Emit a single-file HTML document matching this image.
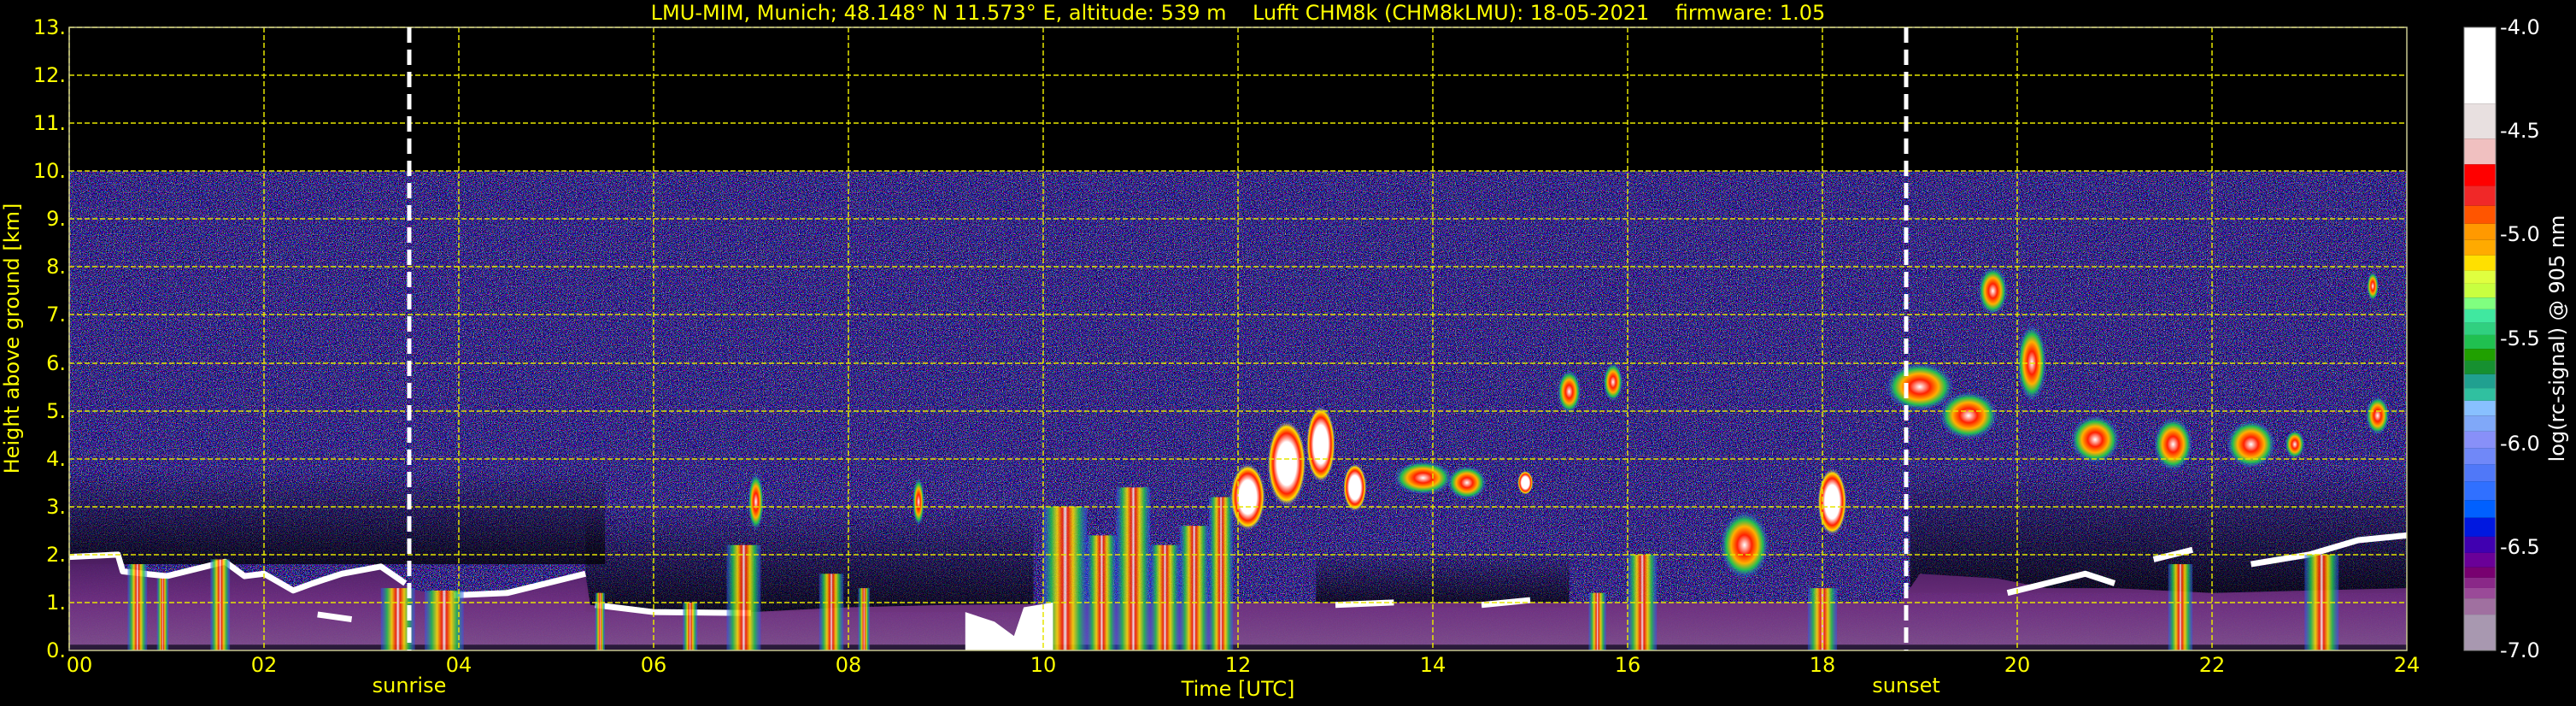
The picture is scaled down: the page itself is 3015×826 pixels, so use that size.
<!DOCTYPE html>
<html><head><meta charset="utf-8">
<style>
html,body{margin:0;padding:0;background:#000;}
svg{display:block;}
text{font-family:"DejaVu Sans","Liberation Sans",sans-serif;}
</style></head><body>
<svg width="3015" height="826" viewBox="0 0 3015 826" xmlns="http://www.w3.org/2000/svg">
<defs>
<filter id="nz" x="0" y="0" width="100%" height="100%" filterUnits="objectBoundingBox">
<feTurbulence type="fractalNoise" baseFrequency="0.9" numOctaves="1" seed="7" result="t"/>
<feColorMatrix in="t" type="matrix" values="4 0 0 0 -2.0  0 4 0 0 -2.1  0 0 4 0 -1.5  0 0 0 0 1"/>
</filter>
<linearGradient id="pl" x1="0" y1="0" x2="1" y2="0">
<stop offset="0" stop-color="#3050ff" stop-opacity="0.5"/><stop offset="0.18" stop-color="#20c050"/><stop offset="0.32" stop-color="#ffe000"/><stop offset="0.44" stop-color="#ff2000"/><stop offset="0.5" stop-color="#ffffff"/><stop offset="0.56" stop-color="#ff2000"/><stop offset="0.68" stop-color="#ffe000"/><stop offset="0.82" stop-color="#20c050"/><stop offset="1" stop-color="#3050ff" stop-opacity="0.5"/>
</linearGradient>
<radialGradient id="bl">
<stop offset="0" stop-color="#ffffff"/><stop offset="0.3" stop-color="#ff2000"/><stop offset="0.55" stop-color="#ffb000"/><stop offset="0.75" stop-color="#20c050"/><stop offset="1" stop-color="#3050ff" stop-opacity="0"/>
</radialGradient>
<radialGradient id="bw">
<stop offset="0" stop-color="#ffffff"/><stop offset="0.5" stop-color="#ffffff"/><stop offset="0.7" stop-color="#ff2000"/><stop offset="0.85" stop-color="#ffe000"/><stop offset="1" stop-color="#3050ff" stop-opacity="0"/>
</radialGradient>
<linearGradient id="pb" x1="0" y1="0" x2="0" y2="1">
<stop offset="0" stop-color="#80508c"/><stop offset="0.5" stop-color="#703080"/><stop offset="1" stop-color="#4a1c60"/>
</linearGradient>
<linearGradient id="dk" x1="0" y1="0" x2="0" y2="1">
<stop offset="0" stop-color="#000" stop-opacity="0.75"/><stop offset="1" stop-color="#000" stop-opacity="0"/>
</linearGradient>
</defs>
<rect width="3015" height="826" fill="#000"/>

<rect x="81" y="200" width="2736" height="561" fill="#000"/>
<g opacity="0.8"><rect x="81" y="200" width="2736" height="561" filter="url(#nz)"/></g>

<g transform="translate(81 761) scale(114 -56.08)">
<rect x="0" y="1.8" width="5.5" height="2.0" fill="url(#dk)"/>
<rect x="5.3" y="0.8" width="4.6" height="2.2" fill="url(#dk)"/>
<rect x="12.8" y="0.9" width="2.6" height="1.2" fill="url(#dk)"/>
<rect x="18.9" y="1.2" width="5.1" height="2.6" fill="url(#dk)"/>
<polygon fill="url(#pb)" opacity="0.95" points="0,0 0,1.95 0.5,2.0 0.55,1.6 1.0,1.5 1.3,1.65 1.6,1.85 1.8,1.5 2.0,1.6 2.3,1.2 2.5,1.4 2.8,1.6 3.2,1.8 3.5,1.3 3.9,1.1 4.5,1.2 5.0,1.4 5.3,1.6 5.35,0.95 6.0,0.8 7.0,0.8 8.0,0.9 9.0,0.95 12,1.0 13,1.0 15,1.0 18.8,1.0 19.0,1.6 19.8,1.5 20.3,1.3 21,1.3 22,1.2 24,1.3 24,0"/>
<rect x="0" y="0" width="24" height="0.12" fill="#2a1a3a"/>
<g fill="none" stroke="#fff" stroke-width="7" stroke-linejoin="round">
<polyline vector-effect="non-scaling-stroke" points="0,1.95 0.5,2.0 0.55,1.65 1.0,1.55 1.3,1.7 1.6,1.85 1.8,1.55 2.0,1.6 2.3,1.25 2.5,1.4 2.8,1.6 3.2,1.75 3.45,1.4"/>
<polyline vector-effect="non-scaling-stroke" points="2.55,0.75 2.9,0.65"/>
<polyline vector-effect="non-scaling-stroke" points="3.95,1.15 4.5,1.2 5.0,1.45 5.3,1.6"/>
<polyline vector-effect="non-scaling-stroke" points="5.4,0.95 6.0,0.8 7.0,0.78"/>
<polyline vector-effect="non-scaling-stroke" points="13.0,0.95 13.6,1.0"/>
<polyline vector-effect="non-scaling-stroke" points="14.5,0.95 15.0,1.05"/>
<polyline vector-effect="non-scaling-stroke" points="19.9,1.2 20.3,1.4 20.7,1.6 21.0,1.4"/>
<polyline vector-effect="non-scaling-stroke" points="21.4,1.9 21.8,2.1"/>
<polyline vector-effect="non-scaling-stroke" points="22.4,1.8 23.0,2.0 23.5,2.3 24,2.4"/>
</g>
<g fill="url(#pl)" opacity="0.85">
<rect x="0.6" y="0" width="0.2" height="1.8"/>
<rect x="0.9" y="0" width="0.12" height="1.5"/>
<rect x="1.45" y="0" width="0.2" height="1.9"/>
<rect x="3.2" y="0" width="0.35" height="1.3"/>
<rect x="3.65" y="0" width="0.4" height="1.25"/>
<rect x="5.4" y="0" width="0.1" height="1.2"/>
<rect x="6.3" y="0" width="0.15" height="1.0"/>
<rect x="6.75" y="0" width="0.35" height="2.2"/>
<rect x="7.7" y="0" width="0.25" height="1.6"/>
<rect x="8.1" y="0" width="0.12" height="1.3"/>
<rect x="10.0" y="0" width="0.45" height="3.0"/>
<rect x="10.45" y="0" width="0.3" height="2.4"/>
<rect x="10.75" y="0" width="0.35" height="3.4"/>
<rect x="11.1" y="0" width="0.3" height="2.2"/>
<rect x="11.4" y="0" width="0.3" height="2.6"/>
<rect x="11.7" y="0" width="0.25" height="3.2"/>
<rect x="15.6" y="0" width="0.18" height="1.2"/>
<rect x="16.0" y="0" width="0.3" height="2.0"/>
<rect x="17.85" y="0" width="0.3" height="1.3"/>
<rect x="21.55" y="0" width="0.25" height="1.8"/>
<rect x="22.95" y="0" width="0.35" height="2.0"/>
</g>
<polygon fill="#fff" points="9.2,0 9.2,0.8 9.5,0.6 9.7,0.3 9.8,0.9 10.1,1.0 10.1,0"/>
<g fill="url(#bl)">
<ellipse cx="7.05" cy="3.1" rx="0.08" ry="0.6"/>
<ellipse cx="8.72" cy="3.1" rx="0.06" ry="0.5"/>
<ellipse cx="13.9" cy="3.6" rx="0.3" ry="0.35"/>
<ellipse cx="14.35" cy="3.5" rx="0.2" ry="0.35"/>
<ellipse cx="15.4" cy="5.4" rx="0.12" ry="0.45"/>
<ellipse cx="15.85" cy="5.6" rx="0.1" ry="0.4"/>
<ellipse cx="17.2" cy="2.2" rx="0.25" ry="0.7"/>
<ellipse cx="19.0" cy="5.5" rx="0.35" ry="0.5"/>
<ellipse cx="19.5" cy="4.9" rx="0.3" ry="0.5"/>
<ellipse cx="19.75" cy="7.5" rx="0.15" ry="0.5"/>
<ellipse cx="20.15" cy="6.0" rx="0.15" ry="0.8"/>
<ellipse cx="20.8" cy="4.4" rx="0.25" ry="0.5"/>
<ellipse cx="21.6" cy="4.3" rx="0.2" ry="0.55"/>
<ellipse cx="22.4" cy="4.3" rx="0.25" ry="0.5"/>
<ellipse cx="22.85" cy="4.3" rx="0.1" ry="0.3"/>
<ellipse cx="23.7" cy="4.9" rx="0.12" ry="0.4"/>
<ellipse cx="23.65" cy="7.6" rx="0.06" ry="0.3"/>
</g>
<g fill="url(#bw)">
<ellipse cx="12.1" cy="3.2" rx="0.18" ry="0.7"/>
<ellipse cx="12.5" cy="3.9" rx="0.2" ry="0.9"/>
<ellipse cx="12.85" cy="4.3" rx="0.15" ry="0.8"/>
<ellipse cx="13.2" cy="3.4" rx="0.12" ry="0.5"/>
<ellipse cx="18.1" cy="3.1" rx="0.15" ry="0.7"/>
<ellipse cx="14.95" cy="3.5" rx="0.08" ry="0.25"/>
</g>
<rect x="0" y="10" width="24" height="3" fill="#000"/>
</g>

<g stroke="#e6e600" stroke-width="1.5" stroke-dasharray="6 3" fill="none">
<line x1="81" y1="32" x2="2817" y2="32"/>
<line x1="81" y1="88" x2="2817" y2="88"/>
<line x1="81" y1="144" x2="2817" y2="144"/>
<line x1="81" y1="200" x2="2817" y2="200"/>
<line x1="81" y1="256" x2="2817" y2="256"/>
<line x1="81" y1="312" x2="2817" y2="312"/>
<line x1="81" y1="368" x2="2817" y2="368"/>
<line x1="81" y1="425" x2="2817" y2="425"/>
<line x1="81" y1="481" x2="2817" y2="481"/>
<line x1="81" y1="537" x2="2817" y2="537"/>
<line x1="81" y1="593" x2="2817" y2="593"/>
<line x1="81" y1="649" x2="2817" y2="649"/>
<line x1="81" y1="705" x2="2817" y2="705"/>
<line x1="81" y1="32" x2="81" y2="761"/>
<line x1="309" y1="32" x2="309" y2="761"/>
<line x1="537" y1="32" x2="537" y2="761"/>
<line x1="765" y1="32" x2="765" y2="761"/>
<line x1="993" y1="32" x2="993" y2="761"/>
<line x1="1221" y1="32" x2="1221" y2="761"/>
<line x1="1449" y1="32" x2="1449" y2="761"/>
<line x1="1677" y1="32" x2="1677" y2="761"/>
<line x1="1905" y1="32" x2="1905" y2="761"/>
<line x1="2133" y1="32" x2="2133" y2="761"/>
<line x1="2361" y1="32" x2="2361" y2="761"/>
<line x1="2589" y1="32" x2="2589" y2="761"/>
</g>
<rect x="81" y="32" width="2736" height="729" fill="none" stroke="#c8c890" stroke-width="1.5"/>
<g stroke="#fff" stroke-width="5" stroke-dasharray="18 8">
<line x1="479" y1="32" x2="479" y2="761"/>
<line x1="2231" y1="32" x2="2231" y2="761"/>
</g>

<text x="1449" y="23" fill="#ffff00" font-size="24" text-anchor="middle" xml:space="preserve">LMU-MIM, Munich; 48.148° N 11.573° E, altitude: 539 m    Lufft CHM8k (CHM8kLMU): 18-05-2021    firmware: 1.05</text>

<g fill="#ffff00" font-size="24" text-anchor="end">
<text x="77" y="40">13.</text><text x="77" y="96">12.</text><text x="77" y="152">11.</text><text x="77" y="208">10.</text>
<text x="77" y="264">9.</text><text x="77" y="320">8.</text><text x="77" y="376">7.</text><text x="77" y="433">6.</text>
<text x="77" y="489">5.</text><text x="77" y="545">4.</text><text x="77" y="601">3.</text><text x="77" y="657">2.</text>
<text x="77" y="713">1.</text><text x="77" y="769">0.</text>
</g>
<text transform="translate(22 396) rotate(-90)" fill="#ffff00" font-size="24" text-anchor="middle">Height above ground [km]</text>

<g fill="#ffff00" font-size="24" text-anchor="middle">
<text x="93" y="786">00</text><text x="309" y="786">02</text><text x="537" y="786">04</text><text x="765" y="786">06</text>
<text x="993" y="786">08</text><text x="1221" y="786">10</text><text x="1449" y="786">12</text><text x="1677" y="786">14</text>
<text x="1905" y="786">16</text><text x="2133" y="786">18</text><text x="2361" y="786">20</text><text x="2589" y="786">22</text>
<text x="2817" y="786">24</text>
<text x="479" y="810">sunrise</text>
<text x="1449" y="814">Time [UTC]</text>
<text x="2231" y="810">sunset</text>
</g>

<svg x="2884" y="0" width="37" height="826" viewBox="0 0 1 1568" preserveAspectRatio="none">
<rect y="60" width="1" height="170" fill="#ffffff"/>
<rect y="230" width="1" height="78" fill="#e8e0e0"/>
<rect y="308" width="1" height="57" fill="#f0c0c0"/>
<rect y="365" width="1" height="48" fill="#ff0000"/>
<rect y="413" width="1" height="44" fill="#f02828"/>
<rect y="457" width="1" height="40" fill="#ff5500"/>
<rect y="497" width="1" height="36" fill="#ff9900"/>
<rect y="533" width="1" height="34" fill="#ffaa00"/>
<rect y="567" width="1" height="34" fill="#ffe000"/>
<rect y="601" width="1" height="29" fill="#e0ff40"/>
<rect y="630" width="1" height="31" fill="#c8ff40"/>
<rect y="661" width="1" height="26" fill="#80ff80"/>
<rect y="687" width="1" height="30" fill="#40e8a0"/>
<rect y="717" width="1" height="27" fill="#30d080"/>
<rect y="744" width="1" height="31" fill="#20c050"/>
<rect y="775" width="1" height="26" fill="#20a000"/>
<rect y="801" width="1" height="30" fill="#169030"/>
<rect y="831" width="1" height="31" fill="#20a090"/>
<rect y="862" width="1" height="28" fill="#30c0a0"/>
<rect y="890" width="1" height="33" fill="#88c0ff"/>
<rect y="923" width="1" height="35" fill="#80a8f8"/>
<rect y="958" width="1" height="37" fill="#8890f8"/>
<rect y="995" width="1" height="36" fill="#7088f8"/>
<rect y="1031" width="1" height="38" fill="#5078f8"/>
<rect y="1069" width="1" height="42" fill="#3070ff"/>
<rect y="1111" width="1" height="39" fill="#0060ff"/>
<rect y="1150" width="1" height="42" fill="#0018e0"/>
<rect y="1192" width="1" height="36" fill="#4000b0"/>
<rect y="1228" width="1" height="32" fill="#6a0098"/>
<rect y="1260" width="1" height="23" fill="#780070"/>
<rect y="1283" width="1" height="23" fill="#8a2888"/>
<rect y="1306" width="1" height="23" fill="#9a4a98"/>
<rect y="1329" width="1" height="36" fill="#a070a0"/>
<rect y="1365" width="1" height="80" fill="#a898b0"/>
</svg>
<rect x="2884" y="32" width="37" height="729" fill="none" stroke="#888" stroke-width="1"/>
<g fill="#ffffff" font-size="24">
<text x="2926" y="40">-4.0</text><text x="2926" y="161">-4.5</text><text x="2926" y="282">-5.0</text>
<text x="2926" y="404">-5.5</text><text x="2926" y="527">-6.0</text><text x="2926" y="648">-6.5</text>
<text x="2926" y="769">-7.0</text>
</g>
<text transform="translate(3001 396) rotate(-90)" fill="#ffffff" font-size="24" text-anchor="middle">log(rc-signal) @ 905 nm</text>
</svg>
</body></html>
